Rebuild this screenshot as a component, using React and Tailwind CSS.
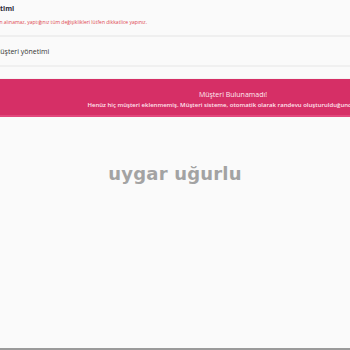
export default function App() {
  return (
    <div className="w-[350px] h-[350px] overflow-hidden bg-[#fafafa] flex flex-col border-b-2 border-[#9a9a9a]" style={{ fontFamily: "'Open Sans', 'Noto Sans', sans-serif" }}>
      {/* Başlık */}
      <div className="h-[37px] shrink-0 flex flex-col pt-[4px] border-b-2 border-[#efefef]">
        <p className="ml-[-46px] text-[7px] font-bold leading-[9px] text-[#2a2a3a] whitespace-nowrap">Müşteri yönetimi</p>
        <p className="ml-[-13px] mt-[5px] text-[5px] leading-[8px] text-[#e0474f] whitespace-nowrap">
          Silinen alınamaz, yaptığınız tüm değişiklikleri lütfen dikkatlice yapınız.
        </p>
      </div>

      {/* Sekme */}
      <div className="h-[30px] shrink-0 flex items-center border-b-2 border-[#f0f0f0]">
        <p className="ml-[-6px] text-[7px] leading-[9px] text-[#333] whitespace-nowrap">Müşteri yönetimi</p>
      </div>
      <div className="h-[12px] shrink-0 border-b border-[#f3f3f3]" />

      {/* Uyarı */}
      <div className="w-[466px] h-[38px] shrink-0 bg-[#d62f66] border-b-2 border-[#e2487c] flex flex-col items-center pt-[11px]">
        <p className="text-[7px] leading-[9px] text-[#ffeaf1] whitespace-nowrap">Müşteri Bulunamadı!</p>
        <p className="mt-[2px] text-[6px] font-semibold leading-[9px] text-[#ffe4ee] whitespace-nowrap">
          Henüz hiç müşteri eklenmemiş. Müşteri sisteme, otomatik olarak randevu oluşturulduğunda eklenir.
        </p>
      </div>

      {/* İsim */}
      <div className="flex justify-center pt-[45px]">
        <p className="text-[18px] font-bold leading-[24px] text-[#a3a3a3] tracking-[0.2px]" style={{ fontFamily: "'DejaVu Sans', sans-serif" }}>
          uygar uğurlu
        </p>
      </div>
    </div>
  );
}
